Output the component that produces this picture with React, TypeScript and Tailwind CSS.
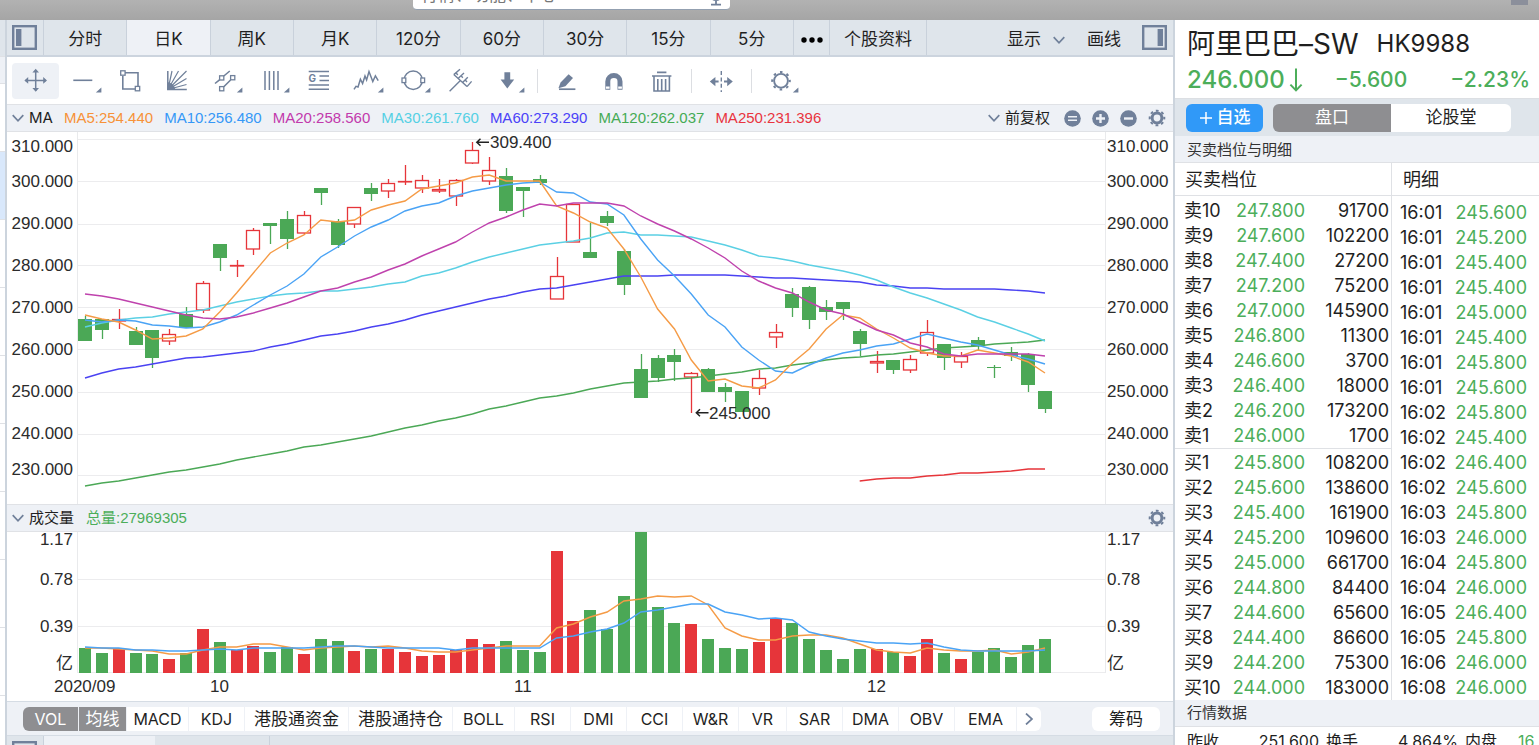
import type { ReactNode } from "react";

const GREEN = "#4ba856";
const RED = "#e6353a";
const SLATE = "#70809a";

/* ---------- market data (plot units of the two panes) ---------- */

type Candle = [up: 0 | 1, high: number, top: number, bottom: number, low: number];

const candles: Candle[] = [
  [0, 316, 319, 341, 341], [0, 319, 319, 330, 339], [1, 309, 319, 321, 329], [0, 327, 331, 345, 345],
  [0, 330, 330, 358, 368], [1, 329, 334, 341, 345], [0, 307, 314, 328, 328], [1, 281, 283, 310, 313],
  [0, 244, 244, 258, 271], [1, 260, 265, 266, 277], [1, 228, 230, 249, 255], [0, 223, 223, 226, 244],
  [0, 211, 219, 239, 249], [1, 211, 215, 233, 234], [0, 188, 188, 193, 205], [0, 219, 221, 245, 248],
  [1, 207, 207, 224, 228], [0, 183, 188, 194, 201], [1, 179, 183, 191, 198], [1, 165, 181, 181, 185],
  [1, 175, 180, 188, 193], [1, 179, 189, 191, 193], [1, 179, 180, 196, 206], [1, 142, 150, 163, 164],
  [1, 157, 170, 181, 185], [0, 168, 176, 211, 213], [0, 187, 187, 191, 217], [0, 175, 179, 183, 185],
  [1, 257, 276, 299, 299], [1, 204, 204, 242, 242], [0, 223, 252, 258, 258], [0, 211, 216, 223, 226],
  [0, 249, 251, 285, 295], [0, 354, 369, 398, 398], [0, 355, 358, 378, 382], [0, 349, 355, 362, 381],
  [1, 372, 373, 377, 413], [0, 368, 369, 392, 392], [0, 383, 387, 392, 402], [0, 391, 391, 412, 412],
  [1, 370, 378, 388, 395], [1, 324, 332, 337, 348], [0, 288, 294, 308, 317], [0, 286, 287, 320, 329],
  [0, 300, 307, 312, 320], [0, 302, 302, 309, 320], [0, 329, 331, 344, 356], [1, 351, 361, 363, 373],
  [0, 360, 360, 370, 374], [1, 355, 359, 370, 373], [1, 320, 332, 353, 356], [0, 344, 344, 358, 370],
  [1, 352, 356, 362, 368], [0, 337, 340, 346, 350], [0, 365, 367, 368, 378], [0, 347, 352, 356, 361],
  [0, 353, 354, 385, 392], [0, 391, 391, 409, 413],
];

const priceLines: { color: string; from: number; values: number[] }[] = [
  { color: "#4ba856", from: 0, values: [486, 483, 481, 478, 475, 472, 470, 467, 464, 460, 457, 454, 451, 447, 445, 442, 439, 436, 432, 428, 425, 421, 418, 414, 409, 406, 402, 398, 396, 393, 389, 386, 383, 382, 381, 379, 378, 376, 374, 372, 369, 368, 365, 363, 360, 358, 357, 355, 354, 352, 350, 348, 347, 346, 344, 343, 342, 340] },
  { color: "#e6353a", from: 46, values: [481, 479, 478, 478, 476, 475, 473, 473, 472, 471, 469, 469] },
  { color: "#4a42f2", from: 0, values: [378, 373, 369, 367, 364, 361, 358, 357, 355, 353, 351, 347, 344, 340, 336, 334, 331, 327, 324, 320, 315, 311, 307, 303, 299, 296, 292, 289, 288, 285, 282, 279, 276, 276, 276, 275, 275, 275, 275, 276, 277, 278, 278, 279, 280, 281, 282, 285, 286, 288, 288, 289, 289, 289, 289, 290, 291, 293] },
  { color: "#5bd0e4", from: 0, values: [327, 323, 320, 318, 317, 314, 312, 310, 306, 302, 299, 296, 294, 293, 291, 291, 289, 287, 284, 282, 276, 273, 268, 262, 257, 253, 249, 245, 243, 241, 238, 233, 232, 235, 235, 236, 237, 241, 245, 250, 256, 258, 261, 265, 268, 271, 275, 280, 287, 293, 298, 304, 310, 317, 322, 328, 334, 341] },
  { color: "#4aa3f5", from: 0, values: [320, 322, 320, 321, 325, 326, 328, 327, 322, 315, 305, 295, 286, 274, 257, 247, 236, 227, 220, 211, 206, 203, 196, 191, 188, 185, 183, 182, 192, 193, 202, 204, 215, 239, 260, 276, 294, 315, 327, 347, 360, 371, 373, 365, 358, 353, 350, 346, 344, 339, 334, 338, 342, 345, 350, 355, 359, 364] },
  { color: "#f59b46", from: 0, values: [315, 319, 322, 330, 339, 338, 336, 329, 312, 293, 273, 253, 243, 235, 220, 222, 220, 210, 205, 201, 189, 186, 183, 177, 175, 181, 181, 181, 206, 213, 222, 228, 249, 277, 309, 329, 360, 381, 379, 386, 388, 380, 363, 349, 329, 315, 318, 329, 338, 348, 353, 356, 356, 350, 353, 356, 362, 373] },
  { color: "#bf42ad", from: 0, values: [294, 296, 299, 303, 307, 311, 315, 318, 319, 317, 313, 308, 303, 297, 291, 288, 282, 277, 270, 264, 256, 249, 242, 232, 223, 217, 210, 204, 206, 203, 203, 203, 206, 216, 224, 231, 239, 248, 258, 271, 281, 288, 293, 302, 310, 314, 322, 330, 335, 343, 347, 354, 356, 354, 354, 354, 354, 356] },
];

const volumeTops = [648, 653, 648, 653, 654, 659, 653, 629, 642, 650, 646, 652, 647, 654, 639, 641, 651, 649, 649, 652, 656, 655, 650, 639, 644, 641, 650, 652, 551, 621, 610, 629, 596, 532, 607, 623, 624, 639, 648, 649, 642, 618, 623, 639, 650, 659, 649, 649, 652, 656, 639, 653, 659, 652, 648, 657, 645, 639];

const volumeLines: { color: string; from: number; values: number[] }[] = [
  { color: "#f59b46", from: 0, values: [648, 648, 649, 650, 651, 654, 654, 650, 647, 647, 644, 644, 647, 650, 648, 647, 646, 647, 646, 648, 651, 652, 652, 650, 648, 646, 646, 646, 628, 624, 617, 612, 601, 599, 596, 597, 596, 605, 628, 636, 640, 640, 636, 635, 635, 638, 644, 650, 652, 653, 648, 650, 651, 651, 650, 654, 652, 648] },
  { color: "#4aa3f5", from: 0, values: [647, 648, 648, 650, 650, 651, 651, 650, 649, 650, 648, 648, 648, 648, 647, 646, 646, 647, 648, 648, 648, 648, 650, 648, 648, 648, 648, 648, 638, 636, 632, 629, 623, 612, 610, 607, 604, 604, 612, 615, 619, 618, 620, 632, 636, 639, 641, 643, 643, 644, 643, 647, 650, 651, 651, 651, 651, 650] },
];

const xAt = (i: number) => 85 + (i * 960) / 57;
const points = (line: { from: number; values: number[] }) =>
  line.values.map((v, i) => `${xAt(line.from + i).toFixed(1)},${v}`).join(" ");

const priceTicks = ["310.000", "300.000", "290.000", "280.000", "270.000", "260.000", "250.000", "240.000", "230.000"];

const averages = [
  { text: "MA5:254.440", cls: "text-[#f79238]" },
  { text: "MA10:256.480", cls: "text-[#3598f7]" },
  { text: "MA20:258.560", cls: "text-[#c239ac]" },
  { text: "MA30:261.760", cls: "text-[#55d0e4]" },
  { text: "MA60:273.290", cls: "text-[#4a42f8]" },
  { text: "MA120:262.037", cls: "text-[#45ab54]" },
  { text: "MA250:231.396", cls: "text-[#e93440]" },
];

const periods = ["分时", "日K", "周K", "月K", "120分", "60分", "30分", "15分", "5分"];

const indicators = [
  { name: "MACD", cls: "w-[61px]" },
  { name: "KDJ", cls: "w-[55px]" },
  { name: "港股通资金", cls: "w-[103px] text-[17px]" },
  { name: "港股通持仓", cls: "w-[103px] text-[17px]" },
  { name: "BOLL", cls: "w-[61px]" },
  { name: "RSI", cls: "w-[55px]" },
  { name: "DMI", cls: "w-[55px]" },
  { name: "CCI", cls: "w-[55px]" },
  { name: "W&R", cls: "w-[55px]" },
  { name: "VR", cls: "w-[47px]" },
  { name: "SAR", cls: "w-[55px]" },
  { name: "DMA", cls: "w-[55px]" },
  { name: "OBV", cls: "w-[55px]" },
  { name: "EMA", cls: "w-[61px]" },
];

const asks = [
  ["卖10", "247.800", "91700"], ["卖9", "247.600", "102200"], ["卖8", "247.400", "27200"], ["卖7", "247.200", "75200"],
  ["卖6", "247.000", "145900"], ["卖5", "246.800", "11300"], ["卖4", "246.600", "3700"], ["卖3", "246.400", "18000"],
  ["卖2", "246.200", "173200"], ["卖1", "246.000", "1700"],
];
const bids = [
  ["买1", "245.800", "108200"], ["买2", "245.600", "138600"], ["买3", "245.400", "161900"], ["买4", "245.200", "109600"],
  ["买5", "245.000", "661700"], ["买6", "244.800", "84400"], ["买7", "244.600", "65600"], ["买8", "244.400", "86600"],
  ["买9", "244.200", "75300"], ["买10", "244.000", "183000"],
];
const trades = [
  ["16:01", "245.600"], ["16:01", "245.200"], ["16:01", "245.400"], ["16:01", "245.400"], ["16:01", "245.000"],
  ["16:01", "245.400"], ["16:01", "245.800"], ["16:01", "245.600"], ["16:02", "245.800"], ["16:02", "245.400"],
  ["16:02", "246.400"], ["16:02", "245.600"], ["16:03", "245.800"], ["16:03", "246.000"], ["16:04", "245.800"],
  ["16:04", "246.000"], ["16:05", "246.400"], ["16:05", "245.800"], ["16:06", "246.000"], ["16:08", "246.000"],
];

/* ---------- icons ---------- */

function Chevron({ right = false }: { right?: boolean }) {
  return (
    <svg className="h-3 w-3 shrink-0" viewBox="0 0 12 12" fill="none" stroke={SLATE} strokeWidth="1.7">
      {right ? <path d="M3 0.5 L9 6 L3 11.5" /> : <path d="M0.7 3.2 L6 8.8 L11.3 3.2" />}
    </svg>
  );
}

function PanelIcon({ side }: { side: "left" | "right" }) {
  return (
    <svg className="h-[25px] w-[25px] shrink-0" viewBox="0 0 25 25">
      <rect x="1.2" y="1.2" width="22.6" height="22.6" fill="none" stroke={SLATE} strokeWidth="2.4" />
      <rect x={side === "left" ? 4 : 15.6} y="4" width="5.4" height="17" fill={SLATE} />
    </svg>
  );
}

function Gear() {
  return (
    <svg className="h-[18px] w-[18px]" viewBox="0 0 18 18" fill="none" stroke={SLATE}>
      <circle cx="9" cy="9" r="4.9" strokeWidth="3" />
      <circle cx="9" cy="9" r="7.3" strokeWidth="2" strokeDasharray="2.8 2.933" strokeDashoffset="1.4" />
    </svg>
  );
}

function RoundIcon({ kind }: { kind: "equal" | "plus" | "minus" }) {
  return (
    <svg className="h-[17px] w-[17px]" viewBox="0 0 17 17" stroke="#eef1f6">
      <circle cx="8.5" cy="8.5" r="8.3" fill={SLATE} stroke="none" />
      {kind === "equal" && <path d="M4 6.8 H13 M4 10.2 H13" strokeWidth="1.4" />}
      {kind === "plus" && <path d="M4 8.5 H13 M8.5 4 V13" strokeWidth="2.4" />}
      {kind === "minus" && <path d="M4 8.5 H13" strokeWidth="2.4" />}
    </svg>
  );
}

type Tool = { label: string; menu?: boolean; art: ReactNode };

const drawTools: Tool[] = [
  {
    label: "移动",
    art: (
      <>
        <path d="M23.7 7 V28 M13.5 17.4 H34" strokeWidth="1.5" />
        <path d="M23.7 5.8 L27 9.6 H20.4 Z M23.7 28.8 L27 25 H20.4 Z M12.4 17.4 L16.2 14 V20.8 Z M35 17.4 L31.2 14 V20.8 Z" fill={SLATE} stroke="none" />
      </>
    ),
  },
  { label: "线段", menu: true, art: <path d="M14.3 17.3 H33.3" strokeWidth="1.6" /> },
  {
    label: "矩形",
    art: (
      <>
        <path d="M19 9.8 H32 V23.5 M16.8 13 V26 H29" strokeWidth="1.6" />
        <rect x="14.7" y="7.8" width="4.4" height="4.4" />
        <rect x="29.3" y="23.4" width="4.4" height="4.4" />
      </>
    ),
  },
  {
    label: "江恩",
    art: (
      <>
        <path d="M14.8 8 V26.6 H33.8" strokeWidth="1.5" />
        <path d="M15 26.5 L19 8 M15 26.5 L25.5 8 M15 26.5 L33.5 8 M15 26.5 L33.5 15.5 M15 26.5 L33.5 21.5" strokeWidth="1.2" />
        <path d="M14.5 19 Q21 20 22.5 27 H14.5 Z" fill={SLATE} stroke="none" />
      </>
    ),
  },
  {
    label: "通道",
    menu: true,
    art: (
      <>
        <path d="M15 20.5 L19.5 16.8 M23.8 13 L29.8 8 M23.8 23.8 L30.6 17" strokeWidth="1.6" />
        <rect x="19.6" y="12.8" width="4.2" height="4.2" />
        <rect x="30.6" y="12.6" width="4.2" height="4.2" />
        <rect x="19.6" y="23.6" width="4.2" height="4.2" />
      </>
    ),
  },
  { label: "周期线", menu: true, art: <path d="M18 8 V27 M22.4 8 V27 M26.8 8 V27 M31 8 V27" strokeWidth="1.5" /> },
  {
    label: "黄金分割",
    art: (
      <>
        <path d="M14.7 8.5 H35 M25.5 13 H35 M25.5 17.5 H35 M14.7 22 H35 M14.7 26.2 H35" strokeWidth="1.6" />
        <text x="14.6" y="19" fontSize="10" fontWeight="700" fill={SLATE} stroke="none" fontFamily="Inter, sans-serif">G</text>
      </>
    ),
  },
  { label: "波浪", menu: true, art: <path d="M13 26.4 L15 23.4 L17 24 L19.4 16.2 L21.6 20.6 L24 13 L25.6 17 L28 8.6 L31.8 18.6 L34.4 12.8 L37.2 17.6" strokeWidth="1.5" /> },
  {
    label: "圆形",
    menu: true,
    art: (
      <>
        <circle cx="25.2" cy="17.3" r="9.2" strokeWidth="1.5" />
        <rect x="14" y="15" width="3.8" height="4.6" fill="#fff" />
        <rect x="32.8" y="15" width="3.8" height="4.6" fill="#fff" />
      </>
    ),
  },
  {
    label: "音叉线",
    art: <path d="M14.6 28.2 L25.4 17.6 M18.8 11.6 L32 23.6 M18.8 11.6 L25 6.2 M23 15.4 L29 10 M27.6 19.6 L32.8 14.2 M32 23.6 L36.6 18.4 M21 9.8 L22.8 12 M26 12.6 L27.8 14.8 M30.2 17 L32 19" strokeWidth="1.4" />,
  },
  { label: "箭头", menu: true, art: <path d="M22.4 9.2 H28.2 V16.4 H32.2 L25.3 25.4 L18.6 16.4 H22.4 Z" fill={SLATE} stroke="none" /> },
];

const editTools: Tool[] = [
  {
    label: "编辑",
    art: (
      <>
        <path d="M17 26.2 H33.4" strokeWidth="1.7" />
        <path d="M26.6 11.2 L31 15 L23.4 23.2 L16.4 25.2 L18.6 19.6 Z" fill={SLATE} stroke="none" />
      </>
    ),
  },
  {
    label: "磁吸",
    art: (
      <>
        <path d="M18.8 26.8 V18.4 A6.1 5.8 0 0 1 31 18.4 V26.8" strokeWidth="5" />
        <path d="M16.9 24.6 H20.6 M29.2 24.6 H32.9" stroke="#fff" strokeWidth="2.4" />
      </>
    ),
  },
  { label: "删除", art: <path d="M21 9.4 H30.4 M16 13 H35.4 M18 13 V28 H33.4 V13 M21.8 16 V28 M25.7 16 V28 M29.6 16 V28" strokeWidth="1.6" /> },
];

const splitTool: Tool = {
  label: "平移",
  art: (
    <>
      <path d="M25.3 8 V29" strokeDasharray="4 2.4" strokeWidth="1.4" />
      <path d="M17 18.6 H22.6 M28 18.6 H34" strokeWidth="2" />
      <path d="M13.8 18.6 L19.4 14 V23.2 Z M36.8 18.6 L31.2 14 V23.2 Z" fill={SLATE} stroke="none" />
    </>
  ),
};

const settingsTool: Tool = {
  label: "设置",
  menu: true,
  art: (
    <>
      <circle cx="25" cy="17.8" r="6.9" strokeWidth="1.9" />
      <circle cx="25" cy="17.8" r="8.8" strokeWidth="2" strokeDasharray="2.6 4.311" strokeDashoffset="1.3" />
    </>
  ),
};

function ToolButton({ tool, active = false }: { tool: Tool; active?: boolean }) {
  return (
    <button type="button" aria-label={tool.label} className={active ? "rounded-sm bg-[#eef1f6]" : ""}>
      <svg className="h-9 w-[47px]" viewBox="0 0 47 36" fill="none" stroke={SLATE} strokeWidth="1.3">
        {tool.art}
        {tool.menu && <path d="M42.4 24.6 V29.6 H36.8 Z" fill={SLATE} stroke="none" />}
      </svg>
    </button>
  );
}

const Divider = () => <span className="ml-2 mr-1 h-6 w-px bg-[#dcdee2]" />;

/* ---------- chart panes ---------- */

function PriceAxis({ side }: { side: "left" | "right" }) {
  return (
    <div className={`flex flex-col pt-px font-['Liberation_Sans',sans-serif] text-[17px] text-[#2b2b2b] ${side === "left" ? "w-[71px] border-r border-[#e9eaec] pr-1 text-right" : "w-[68px] border-l border-[#e9eaec] pl-px"}`}>
      {priceTicks.map((t, i) => (
        <span key={t} className={i === 0 ? "h-7 leading-7" : i === 8 ? "h-[30px] leading-[30px]" : "h-[42px] leading-[42px]"}>
          {t}
        </span>
      ))}
    </div>
  );
}

function VolumeAxis({ side }: { side: "left" | "right" }) {
  return (
    <div className={`flex h-[141px] flex-col font-['Liberation_Sans','Noto_Sans_CJK_SC',sans-serif] text-[17px] text-[#2b2b2b] ${side === "left" ? "w-[71px] border-r border-[#e9eaec] pr-1 text-right" : "w-[68px] border-l border-[#e9eaec] pl-px"}`}>
      <span className="h-4 shrink-0 leading-4">1.17</span>
      <span className="h-16 shrink-0 leading-[64px]">0.78</span>
      <span className="h-[30px] shrink-0 leading-[30px]">0.39</span>
      <span className="shrink-0 pt-3 leading-5">亿</span>
    </div>
  );
}

function PriceChart() {
  return (
    <svg className="h-[372px] min-w-0 flex-1" viewBox="78 132 1027 372" preserveAspectRatio="none" role="img" aria-label="日K">
      {[139, 181, 224, 265, 307, 349, 392, 434, 475].map((y) => (
        <path key={y} d={`M78 ${y}.5 H1105`} stroke="#ececee" />
      ))}
      {candles.map(([up, high, top, bottom, low], i) => {
        const x = Math.round(xAt(i));
        const color = up ? RED : GREEN;
        return (
          <g key={i} stroke={color}>
            <path d={`M${x}.5 ${high} V${top} M${x}.5 ${bottom} V${low}`} strokeWidth="1.3" />
            {up ? (
              <rect x={x - 6.5} y={top + 0.5} width="13" height={Math.max(bottom - top - 0.5, 0.4)} fill="none" strokeWidth="1.3" />
            ) : (
              <rect x={x - 7} y={top} width="14" height={bottom - top} fill={color} stroke="none" />
            )}
          </g>
        );
      })}
      {priceLines.map((l) => (
        <polyline key={l.color} points={points(l)} fill="none" stroke={l.color} strokeWidth="1.4" />
      ))}
      <g stroke="#222" strokeWidth="1.5" fill="none">
        <path d="M476.5 142.3 H489 M480.5 138.8 L476.8 142.3 L480.5 145.8" />
        <path d="M696 412.8 H708.5 M700 409.3 L696.3 412.8 L700 416.3" />
      </g>
      <g fontFamily="Liberation Sans, sans-serif" fontSize="17" fill="#2b2b2b">
        <text x="490" y="148">309.400</text>
        <text x="709" y="419">245.000</text>
      </g>
    </svg>
  );
}

function VolumeChart() {
  return (
    <svg className="h-[141px] min-w-0 flex-1" viewBox="78 532 1027 141" preserveAspectRatio="none" role="img" aria-label="成交量">
      {[579, 626, 672].map((y) => (
        <path key={y} d={`M78 ${y}.5 H1105`} stroke="#ececee" />
      ))}
      {volumeTops.map((top, i) => (
        <rect key={i} x={Math.round(xAt(i)) - 6} y={top} width="12" height={673 - top} fill={candles[i][0] ? RED : GREEN} />
      ))}
      {volumeLines.map((l) => (
        <polyline key={l.color} points={points(l)} fill="none" stroke={l.color} strokeWidth="1.4" />
      ))}
    </svg>
  );
}

/* ---------- quote panel ---------- */

function Levels({ rows, label }: { rows: string[][]; label: string }) {
  return (
    <table className="w-full table-fixed" aria-label={label}>
      <tbody>
        {rows.map(([name, price, qty]) => (
          <tr key={name} className="h-[25px]">
            <th scope="row" className="w-[52px] p-0 pl-[9px] text-left font-normal">{name}</th>
            <td className="w-[78px] p-0 text-right text-[#4cae5a]">{price}</td>
            <td className="p-0 pr-0.5 text-right">{qty}</td>
          </tr>
        ))}
      </tbody>
    </table>
  );
}

function QuotePanel() {
  return (
    <aside className="flex w-[364px] shrink-0 flex-col overflow-hidden bg-white">
      <header className="h-[79px] shrink-0 border-b border-[#dcdfe3] pl-3 pr-[9px]">
        <h1 className="flex h-[46px] items-center gap-[18px] whitespace-nowrap pt-0.5 text-[24px]">
          <span className="text-[28px]">阿里巴巴–SW</span>
          <span>HK9988</span>
        </h1>
        <p className="flex h-7 items-center whitespace-nowrap text-[21px] font-medium text-[#4cae5a]">
          <span className="text-[24px]">246.000</span>
          <svg className="ml-1 h-6 w-3.5" viewBox="0 0 14 24" fill="none" stroke="#4cae5a" strokeWidth="2">
            <path d="M7 0.5 V22 M1.4 16.6 L7 22.4 L12.6 16.6" />
          </svg>
          <span className="ml-8">−5.600</span>
          <span className="ml-auto">−2.23%</span>
        </p>
      </header>
      <div className="flex h-[37px] shrink-0 items-center bg-[#dfe5eb] pl-[11px]">
        <button type="button" className="flex h-7 w-[77px] items-center justify-center gap-1 rounded-md bg-[#3099f8] text-[17px] font-medium text-white">
          <svg className="h-3.5 w-3.5" viewBox="0 0 14 14" stroke="#fff" strokeWidth="1.5"><path d="M1 7 H13 M7 1 V13" /></svg>
          自选
        </button>
        <div className="ml-2.5 flex h-7 overflow-hidden rounded-md text-[17px]">
          <button type="button" className="w-[118px] bg-[#8e8e91] text-white">盘口</button>
          <button type="button" className="w-[120px] bg-white">论股堂</button>
        </div>
      </div>
      <h2 className="h-[27px] shrink-0 border-b border-[#dfe1e5] bg-[#eef1f6] pl-3 text-[15px] leading-[27px] text-[#333]">买卖档位与明细</h2>
      <div className="flex h-[537px] shrink-0 text-[18px] leading-[25px]">
        <section className="flex w-[217px] flex-col border-r border-[#dfe1e5]">
          <h3 className="mb-0.5 h-[33px] border-b border-[#dfe1e5] pl-2.5 text-[18px] leading-[34px]">买卖档位</h3>
          <Levels rows={asks} label="卖盘" />
          <hr className="mb-px border-[#dfe1e5]" />
          <Levels rows={bids} label="买盘" />
        </section>
        <section className="flex-1">
          <h3 className="mb-1 h-[33px] border-b border-[#dfe1e5] pl-[11px] text-[18px] leading-[34px]">明细</h3>
          <table className="w-full table-fixed" aria-label="明细">
            <tbody>
              {trades.map(([time, price], i) => (
                <tr key={i} className="h-[25px]">
                  <td className="w-[60px] p-0 pl-2">{time}</td>
                  <td className="p-0 pr-3 text-right text-[#4cae5a]">{price}</td>
                </tr>
              ))}
            </tbody>
          </table>
        </section>
      </div>
      <h2 className="h-[27px] shrink-0 border-b border-[#dfe1e5] bg-[#eef1f6] pl-3 text-[15px] leading-[26px] text-[#333]">行情数据</h2>
      <dl className="flex shrink-0 whitespace-nowrap pl-3 text-[16px] leading-7">
        <dt className="w-[34px] shrink-0">昨收</dt>
        <dd className="w-[98px] shrink-0 text-right">251.600</dd>
        <dt className="w-10 shrink-0 pl-[7px]">换手</dt>
        <dd className="w-[99px] shrink-0 text-right">4.864%</dd>
        <dt className="w-[60px] shrink-0 pl-[7px]">内盘</dt>
        <dd className="shrink-0 text-[#4cae5a]">16</dd>
      </dl>
    </aside>
  );
}

export default function App() {
  return (
    <div className="flex h-screen flex-col overflow-hidden bg-white font-['Inter','Noto_Sans_CJK_SC',sans-serif] text-[17px] text-[#1f1f1f]">
      <div className="flex h-5 shrink-0 items-end justify-between overflow-hidden bg-linear-to-b from-[#b2b2b2] to-[#a5a5a5] pl-[413px] pr-[11px]">
        <label className="mb-2.5 flex h-7 w-[317px] items-center rounded-[4px] border-b border-[#93a0b0] bg-white px-2">
          <input type="text" aria-label="搜索" placeholder="行情、功能、中心" className="w-0 flex-1 text-[17px] outline-none placeholder:text-[#777]" />
          <svg className="h-6 w-3" viewBox="0 0 12 24" fill="none" stroke={SLATE} strokeWidth="1.8">
            <path d="M1 11 Q1 16 6 16 Q11 16 11 11 M6 16 V20.6 M1 20.6 H11" />
          </svg>
        </label>
        <span className="mb-[15px] h-4 w-[17px] bg-[#8b8f9b]" />
      </div>

      <div className="flex min-h-0 flex-1">
        <div className="flex w-[7px] shrink-0 flex-col border-r-2 border-[#ccd4dd] bg-white">
          <span className="h-9 shrink-0 bg-[#dfe5eb]" />
          <span className="h-7 shrink-0 border-y border-[#dfe1e5] bg-[#eef1f6]" />
          {Array.from({ length: 9 }, (_, i) => (
            <span key={i} className={`h-[68px] shrink-0 border-b border-[#dfe1e5] ${i === 1 ? "bg-[#d9e8fb]" : ""}`} />
          ))}
        </div>

        <main className="flex min-w-0 flex-1 flex-col border-r-2 border-[#ccd4dd]">
          <div className="flex h-[37px] shrink-0 items-stretch border-b-2 border-[#ccd4de] bg-[#dfe5eb]">
            <button type="button" aria-label="左侧栏" className="flex w-[37px] items-center border-r border-[#c9d1db] pl-[5px]">
              <PanelIcon side="left" />
            </button>
            <nav className="flex w-[750px]">
              {periods.map((p, i) => (
                <button key={p} type="button" className={`flex-1 border-r border-[#c9d1db] pt-1 ${i === 1 ? "bg-[#eef1f6]" : ""}`}>{p}</button>
              ))}
            </nav>
            <button type="button" aria-label="更多" className="flex w-9 items-center justify-center border-r border-[#c9d1db] pt-1">
              <svg className="h-1.5 w-6" viewBox="0 0 24 6"><circle cx="4" cy="3" r="2.7" /><circle cx="12" cy="3" r="2.7" /><circle cx="20" cy="3" r="2.7" /></svg>
            </button>
            <button type="button" className="w-[97px] border-r border-[#c9d1db] pt-1">个股资料</button>
            <div className="ml-auto flex items-center pr-[6px]">
              <button type="button" className="flex items-center gap-3 pt-1">显示<Chevron /></button>
              <button type="button" className="ml-[22px] pt-1">画线</button>
              <button type="button" aria-label="右侧栏" className="ml-[21px]"><PanelIcon side="right" /></button>
            </div>
          </div>

          <div className="flex h-12 shrink-0 items-center border-b border-[#e0e2e6] pl-[5px]">
            {drawTools.map((t, i) => <ToolButton key={t.label} tool={t} active={i === 0} />)}
            <Divider />
            {editTools.map((t) => <ToolButton key={t.label} tool={t} />)}
            <Divider />
            <ToolButton tool={splitTool} />
            <Divider />
            <ToolButton tool={settingsTool} />
          </div>

          <div className="flex h-[27px] shrink-0 items-center whitespace-nowrap border-b border-[#e0e2e6] bg-[#eef1f6] pl-[5px] pr-[7px] text-[15px]">
            <button type="button" className="flex items-center gap-[5px]"><Chevron />MA</button>
            <div className="ml-[11px] flex gap-[11px] font-['Liberation_Sans',sans-serif]">
              {averages.map((a) => <span key={a.text} className={a.cls}>{a.text}</span>)}
            </div>
            <button type="button" className="ml-auto flex items-center gap-[5px]"><Chevron />前复权</button>
            <div className="ml-3.5 flex items-center gap-[11px]">
              <button type="button" aria-label="还原"><RoundIcon kind="equal" /></button>
              <button type="button" aria-label="放大"><RoundIcon kind="plus" /></button>
              <button type="button" aria-label="缩小"><RoundIcon kind="minus" /></button>
              <button type="button" aria-label="指标设置"><Gear /></button>
            </div>
          </div>

          <div className="flex h-[373px] shrink-0 border-b border-[#e0e2e6]">
            <PriceAxis side="left" />
            <PriceChart />
            <PriceAxis side="right" />
          </div>

          <div className="flex h-[27px] shrink-0 items-center border-b border-[#e0e2e6] bg-[#eef1f6] pl-[5px] pr-[7px] text-[15px]">
            <button type="button" className="flex items-center gap-[5px]"><Chevron />成交量</button>
            <span className="ml-3 font-['Liberation_Sans','Noto_Sans_CJK_SC',sans-serif] text-[#4cae5a]">总量:27969305</span>
            <button type="button" aria-label="成交量设置" className="ml-auto"><Gear /></button>
          </div>

          <div className="flex shrink-0">
            <VolumeAxis side="left" />
            <VolumeChart />
            <VolumeAxis side="right" />
          </div>

          <div className="flex h-7 shrink-0 pl-[47px] font-['Liberation_Sans',sans-serif] text-[17px] leading-7 text-[#2b2b2b]">
            <span className="w-[156px]">2020/09</span>
            <span className="w-[304px]">10</span>
            <span className="w-[353px]">11</span>
            <span>12</span>
          </div>

          <div className="flex h-[35px] shrink-0 items-center whitespace-nowrap border-y border-[#d5dce4] bg-[#eef1f6] pl-4 pr-[13px] text-[16px]">
            <div className="flex h-6 gap-px overflow-hidden rounded-md">
              <button type="button" className="w-[55px] bg-[#8e8e91] text-white">VOL</button>
              <button type="button" className="w-[47px] bg-[#8e8e91] text-[17px] text-white">均线</button>
              {indicators.map((n) => (
                <button key={n.name} type="button" className={`bg-white ${n.cls}`}>{n.name}</button>
              ))}
              <button type="button" aria-label="下一页" className="flex w-6 items-center justify-center bg-white"><Chevron right /></button>
            </div>
            <button type="button" className="ml-auto h-6 w-[68px] rounded-md bg-white text-[17px]">筹码</button>
          </div>

          <div className="flex min-h-0 flex-1 overflow-hidden bg-[#dfe5eb]">
            <span className="w-[37px] shrink-0 border-r border-[#c9d1db] pl-[5px] pt-[5px]"><PanelIcon side="left" /></span>
            <span className="w-[111px] bg-[#eef1f6]" />
            <span className="w-[115px] border-r border-[#c9d1db]" />
          </div>
        </main>

        <QuotePanel />
      </div>
    </div>
  );
}
